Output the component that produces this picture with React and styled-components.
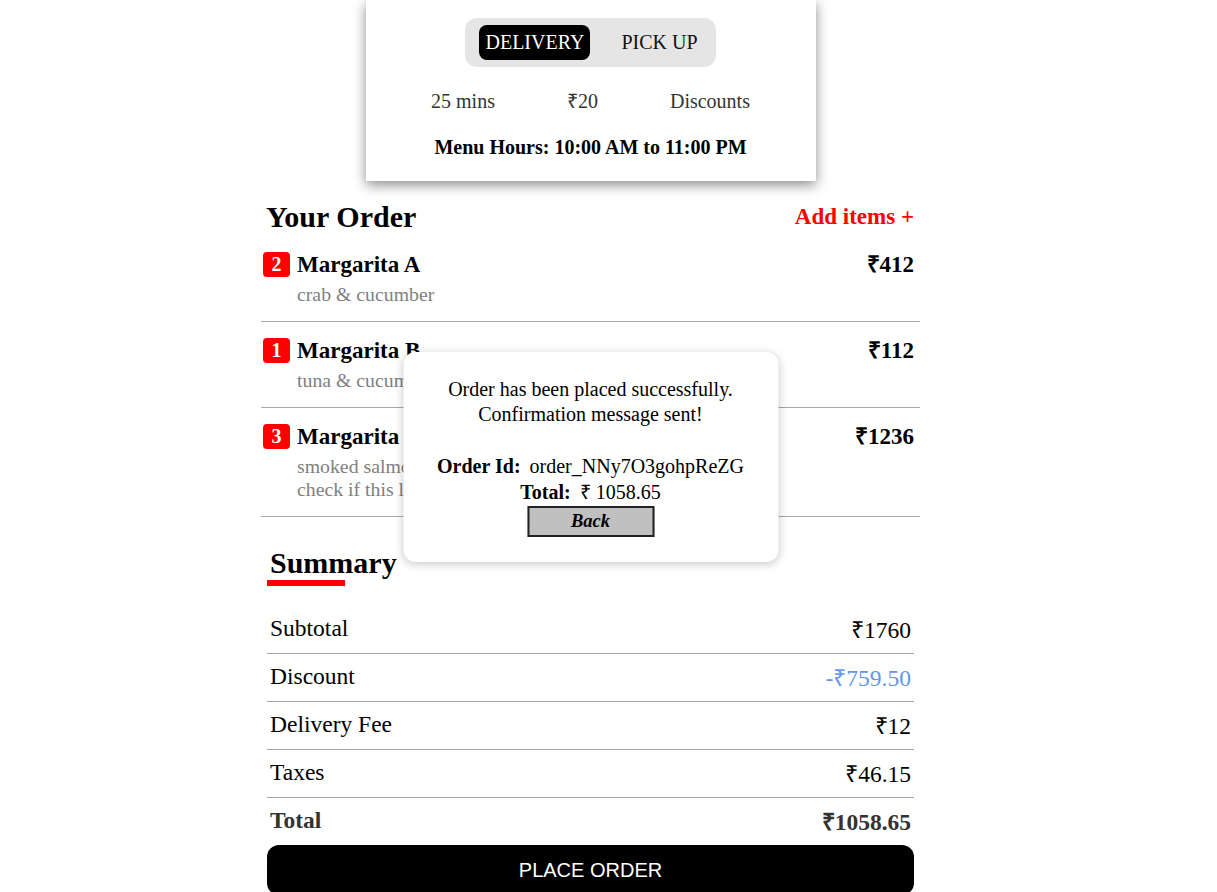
import React from "react";
import styled, { createGlobalStyle } from "styled-components";

const GlobalStyle = createGlobalStyle`
  body {
    margin: 0;
    background: #fff;
    color: #000;
    font-family: "Liberation Serif", "Times New Roman", serif;
  }
`;

const Column = styled.div`
  position: relative;
  width: 659px;
  margin-left: 261px;
  padding-bottom: 40px;
`;

const Card = styled.div`
  width: 450px;
  margin: 0 auto;
  padding: 18px 0 22px;
  display: flex;
  flex-direction: column;
  align-items: center;
  gap: 23px;
  background: #fff;
  box-shadow: 0 4px 12px rgba(0, 0, 0, 0.45);
`;

const Toggle = styled.div`
  display: flex;
  gap: 25px;
  padding: 7px 12px 7px 14px;
  background: #e5e5e5;
  border-radius: 12px;
`;

const ToggleButton = styled.div`
  padding: 6px 6px;
  line-height: 23px;
  font-size: 20px;
  border-radius: 8px;
  background: ${(p) => (p.$active ? "#000" : "transparent")};
  color: ${(p) => (p.$active ? "#fff" : "#111")};
`;

const InfoRow = styled.div`
  display: flex;
  gap: 72px;
  font-size: 20px;
  line-height: 23px;
  color: #333;
`;

const Hours = styled.div`
  font-size: 20px;
  line-height: 23px;
  font-weight: bold;
`;

const OrderHeader = styled.div`
  margin-top: 19px;
  margin-bottom: 2px;
  padding: 0 6px 0 5px;
  display: flex;
  justify-content: space-between;
  align-items: center;
`;

const Title = styled.h2`
  margin: 0;
  font-size: 30px;
  line-height: 34px;
  font-weight: bold;
`;

const AddItems = styled.span`
  color: #ff0000;
  font-size: 23px;
  font-weight: bold;
`;

const Item = styled.div`
  display: flex;
  align-items: flex-start;
  padding: 16px 6px 15px 2px;
  border-bottom: 1px solid #a8a8a8;
`;

const Badge = styled.span`
  width: 27px;
  height: 25px;
  margin-right: 7px;
  flex-shrink: 0;
  display: flex;
  align-items: center;
  justify-content: center;
  background: #ff0000;
  color: #fff;
  border-radius: 4px;
  font-size: 20px;
  font-weight: bold;
`;

const ItemBody = styled.div`
  flex: 1;
  display: flex;
  flex-direction: column;
  gap: 5px;
`;

const ItemName = styled.div`
  font-size: 23px;
  line-height: 26px;
  font-weight: bold;
`;

const ItemDesc = styled.div`
  font-size: 19.8px;
  line-height: 23px;
  color: #808080;
`;

const ItemPrice = styled.div`
  font-size: 23px;
  line-height: 26px;
  font-weight: bold;
`;

const Summary = styled.div`
  padding: 0 6px;
  margin-top: 29px;
`;

const SummaryTitle = styled.h2`
  margin: 0;
  padding-left: 3px;
  font-size: 30px;
  line-height: 34px;
  font-weight: bold;
`;

const Underline = styled.div`
  width: 78px;
  height: 6px;
  background: #ff0000;
  margin-bottom: 20px;
`;

const Row = styled.div`
  box-sizing: border-box;
  height: ${(p) => (p.$last ? "47px" : "48px")};
  padding: 0 3px 2px;
  display: flex;
  justify-content: space-between;
  align-items: center;
  font-size: 23.5px;
  border-bottom: ${(p) => (p.$last ? "none" : "1px solid #a8a8a8")};
  font-weight: ${(p) => (p.$bold ? "bold" : "normal")};
  color: ${(p) => (p.$bold ? "#333" : "#000")};
`;

const Discount = styled.span`
  color: #6495ed;
`;

const PlaceOrder = styled.button`
  width: 100%;
  height: 50px;
  border: none;
  border-radius: 12px;
  background: #000;
  color: #fff;
  font-family: "Liberation Sans", Arial, sans-serif;
  font-size: 20px;
`;

const Modal = styled.div`
  position: absolute;
  top: 352px;
  left: 50%;
  transform: translateX(-50%);
  width: 375px;
  box-sizing: border-box;
  padding: 25px 20px 25px;
  background: #fff;
  border-radius: 12px;
  box-shadow: 0 2px 10px rgba(0, 0, 0, 0.22);
  display: flex;
  flex-direction: column;
  align-items: center;
  text-align: center;
  font-size: 20px;
  line-height: 25px;
`;

const Message = styled.p`
  margin: 0 0 26px;
`;

const Detail = styled.div`
  display: flex;
  gap: 9px;
  line-height: 26px;
`;

const Label = styled.b``;

const BackButton = styled.button`
  margin-top: 1px;
  width: 127px;
  height: 31px;
  background: #c0c0c0;
  border: 2px solid #222;
  font-family: "Liberation Serif", "Times New Roman", serif;
  font-size: 18.5px;
  font-weight: bold;
  font-style: italic;
  color: #000;
  padding: 0;
`;

const items = [
  { qty: 2, name: "Margarita A", desc: ["crab & cucumber"], price: "₹412" },
  { qty: 1, name: "Margarita B", desc: ["tuna & cucumber"], price: "₹112" },
  {
    qty: 3,
    name: "Margarita C",
    desc: ["smoked salmon, avocado & cream cheese", "check if this long description wraps"],
    price: "₹1236",
  },
];

const summary = [
  { label: "Subtotal", value: "₹1760" },
  { label: "Discount", value: <Discount>-₹759.50</Discount> },
  { label: "Delivery Fee", value: "₹12" },
  { label: "Taxes", value: "₹46.15" },
];

export default function App() {
  return (
    <>
      <GlobalStyle />
      <Column>
        <Card>
          <Toggle>
            <ToggleButton $active>DELIVERY</ToggleButton>
            <ToggleButton>PICK UP</ToggleButton>
          </Toggle>
          <InfoRow>
            <span>25 mins</span>
            <span>₹20</span>
            <span>Discounts</span>
          </InfoRow>
          <Hours>Menu Hours: 10:00 AM to 11:00 PM</Hours>
        </Card>

        <OrderHeader>
          <Title>Your Order</Title>
          <AddItems>Add items +</AddItems>
        </OrderHeader>

        {items.map((it) => (
          <Item key={it.name}>
            <Badge>{it.qty}</Badge>
            <ItemBody>
              <ItemName>{it.name}</ItemName>
              <ItemDesc>
                {it.desc.map((line) => (
                  <div key={line}>{line}</div>
                ))}
              </ItemDesc>
            </ItemBody>
            <ItemPrice>{it.price}</ItemPrice>
          </Item>
        ))}

        <Summary>
          <SummaryTitle>Summary</SummaryTitle>
          <Underline />
          {summary.map((r) => (
            <Row key={r.label}>
              <span>{r.label}</span>
              <span>{r.value}</span>
            </Row>
          ))}
          <Row $bold $last>
            <span>Total</span>
            <span>₹1058.65</span>
          </Row>
          <PlaceOrder>PLACE ORDER</PlaceOrder>
        </Summary>

        <Modal>
          <Message>
            Order has been placed successfully.
            <br />
            Confirmation message sent!
          </Message>
          <Detail>
            <Label>Order Id:</Label>
            <span>order_NNy7O3gohpReZG</span>
          </Detail>
          <Detail>
            <Label>Total:</Label>
            <span>₹ 1058.65</span>
          </Detail>
          <BackButton>Back</BackButton>
        </Modal>
      </Column>
    </>
  );
}
